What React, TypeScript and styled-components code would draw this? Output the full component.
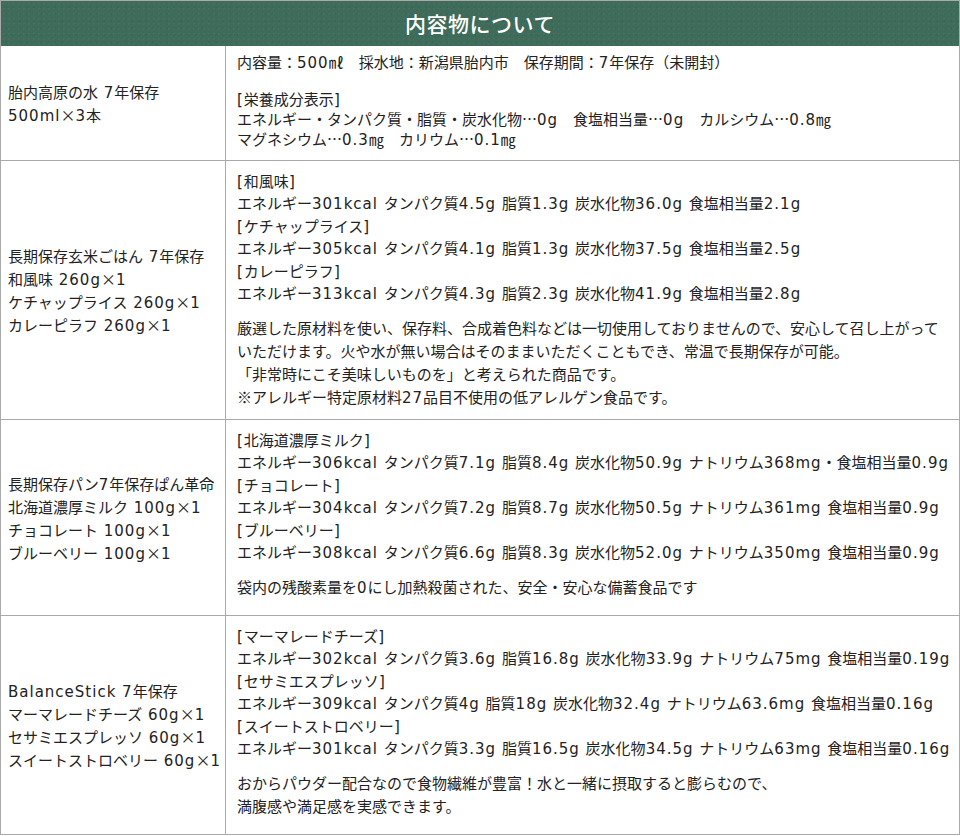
import React from 'react';
import styled, { createGlobalStyle } from 'styled-components';

type Item = {
  label: string;
  value: string;
};

type Product = {
  name: string[];
  items: Item[];
  note: string[];
  tail: number;
};

const GlobalStyle = createGlobalStyle`
  html, body {
    margin: 0;
    padding: 0;
    background: #fff;
  }
  body {
    font-family: "Noto Sans CJK JP", sans-serif;
    color: #222;
  }
`;

const Table = styled.div`
  width: 960px;
  box-sizing: border-box;
  border: 1px solid #aaa;
`;

const Header = styled.h2`
  margin: 0;
  height: 45px;
  line-height: 44px;
  text-align: center;
  font-size: 21px;
  font-weight: 500;
  color: #fff;
  letter-spacing: 0.5px;
  background-color: #3e6b5a;
  background-image: radial-gradient(rgba(255, 255, 255, 0.04) 1px, transparent 1px),
    radial-gradient(rgba(0, 0, 0, 0.05) 1px, transparent 1px);
  background-size: 5px 5px, 7px 7px;
  background-position: 0 0, 2px 3px;
`;

const Row = styled.div<{ $last?: boolean }>`
  display: grid;
  grid-template-columns: 225px 1fr;
  border-bottom: ${(p) => (p.$last ? 'none' : '1px solid #aaa')};
`;

const Name = styled.div`
  box-sizing: border-box;
  border-right: 1px solid #aaa;
  padding: 0 4px 0 7px;
  display: flex;
  flex-direction: column;
  justify-content: center;
  font-size: 15px;
  line-height: 23px;
`;

const Detail = styled.div<{ $top: number; $bottom: number }>`
  padding: ${(p) => `${p.$top}px 8px ${p.$bottom}px 11px`};
  font-size: 15px;
  line-height: 22px;
`;

const Spec = styled.p`
  margin: 0 0 17px;
  line-height: 21px;
`;

const Nutrition = styled.div`
  line-height: 20px;
`;

const Group = styled.div`
  margin-bottom: 1px;
`;

const Note = styled.p`
  margin: 12px 0 0;
  line-height: 23px;
`;

const Latin = styled.span`
  font-family: "DejaVu Sans", sans-serif;
  letter-spacing: 1px;
  line-height: 1;
`;

// ascii runs are set in a wider latin face so digits take the reference's width
const T = ({ s }: { s: string }) => (
  <>
    {s.split(/([\x20-\x7E]*[\x21-\x7E][\x20-\x7E]*)/).map((part, i) =>
      i % 2 ? <Latin key={i}>{part}</Latin> : <React.Fragment key={i}>{part}</React.Fragment>
    )}
  </>
);

const Lines = ({ lines }: { lines: string[] }) => (
  <>
    {lines.map((l, i) => (
      <React.Fragment key={i}>
        {i > 0 && <br />}
        <T s={l} />
      </React.Fragment>
    ))}
  </>
);

const products: Product[] = [
  {
    name: ['長期保存玄米ごはん 7年保存', '和風味 260g×1', 'ケチャップライス 260g×1', 'カレーピラフ 260g×1'],
    items: [
      { label: '[和風味]', value: 'エネルギー301kcal タンパク質4.5g 脂質1.3g 炭水化物36.0g 食塩相当量2.1g' },
      { label: '[ケチャップライス]', value: 'エネルギー305kcal タンパク質4.1g 脂質1.3g 炭水化物37.5g 食塩相当量2.5g' },
      { label: '[カレーピラフ]', value: 'エネルギー313kcal タンパク質4.3g 脂質2.3g 炭水化物41.9g 食塩相当量2.8g' },
    ],
    note: [
      '厳選した原材料を使い、保存料、合成着色料などは一切使用しておりませんので、安心して召し上がって',
      'いただけます。火や水が無い場合はそのままいただくこともでき、常温で長期保存が可能。',
      '「非常時にこそ美味しいものを」と考えられた商品です。',
      '※アレルギー特定原材料27品目不使用の低アレルゲン食品です。',
    ],
    tail: 11,
  },
  {
    name: ['長期保存パン7年保存ぱん革命', '北海道濃厚ミルク 100g×1', 'チョコレート 100g×1', 'ブルーベリー 100g×1'],
    items: [
      { label: '[北海道濃厚ミルク]', value: 'エネルギー306kcal タンパク質7.1g 脂質8.4g 炭水化物50.9g ナトリウム368mg・食塩相当量0.9g' },
      { label: '[チョコレート]', value: 'エネルギー304kcal タンパク質7.2g 脂質8.7g 炭水化物50.5g ナトリウム361mg 食塩相当量0.9g' },
      { label: '[ブルーベリー]', value: 'エネルギー308kcal タンパク質6.6g 脂質8.3g 炭水化物52.0g ナトリウム350mg 食塩相当量0.9g' },
    ],
    note: ['袋内の残酸素量を0にし加熱殺菌された、安全・安心な備蓄食品です'],
    tail: 17,
  },
  {
    name: ['BalanceStick 7年保存', 'マーマレードチーズ 60g×1', 'セサミエスプレッソ 60g×1', 'スイートストロベリー 60g×1'],
    items: [
      { label: '[マーマレードチーズ]', value: 'エネルギー302kcal タンパク質3.6g 脂質16.8g 炭水化物33.9g ナトリウム75mg 食塩相当量0.19g' },
      { label: '[セサミエスプレッソ]', value: 'エネルギー309kcal タンパク質4g 脂質18g 炭水化物32.4g ナトリウム63.6mg 食塩相当量0.16g' },
      { label: '[スイートストロベリー]', value: 'エネルギー301kcal タンパク質3.3g 脂質16.5g 炭水化物34.5g ナトリウム63mg 食塩相当量0.16g' },
    ],
    note: ['おからパウダー配合なので食物繊維が豊富！水と一緒に摂取すると膨らむので、', '満腹感や満足感を実感できます。'],
    tail: 17,
  },
];

const App: React.FC = () => {
  return (
    <>
      <GlobalStyle />
      <Table>
        <Header>内容物について</Header>
        <Row>
          <Name>
            <div><T s="胎内高原の水 7年保存" /></div>
            <div><T s="500ml×3本" /></div>
          </Name>
          <Detail $top={5} $bottom={11}>
            <Spec>
              <T s="内容量：500㎖　採水地：新潟県胎内市　保存期間：7年保存（未開封）" />
            </Spec>
            <Nutrition>
              <Lines
                lines={[
                  '[栄養成分表示]',
                  'エネルギー・タンパク質・脂質・炭水化物…0g　食塩相当量…0g　カルシウム…0.8㎎',
                  'マグネシウム…0.3㎎　カリウム…0.1㎎',
                ]}
              />
            </Nutrition>
          </Detail>
        </Row>
        {products.map((p, idx) => (
          <Row key={idx} $last={idx === products.length - 1}>
            <Name>
              {p.name.map((n, i) => (
                <div key={i}><T s={n} /></div>
              ))}
            </Name>
            <Detail $top={9} $bottom={p.tail}>
              {p.items.map((it, i) => (
                <Group key={i}>
                  <T s={it.label} />
                  <br />
                  <T s={it.value} />
                </Group>
              ))}
              <Note>
                <Lines lines={p.note} />
              </Note>
            </Detail>
          </Row>
        ))}
      </Table>
    </>
  );
};

export default App;
